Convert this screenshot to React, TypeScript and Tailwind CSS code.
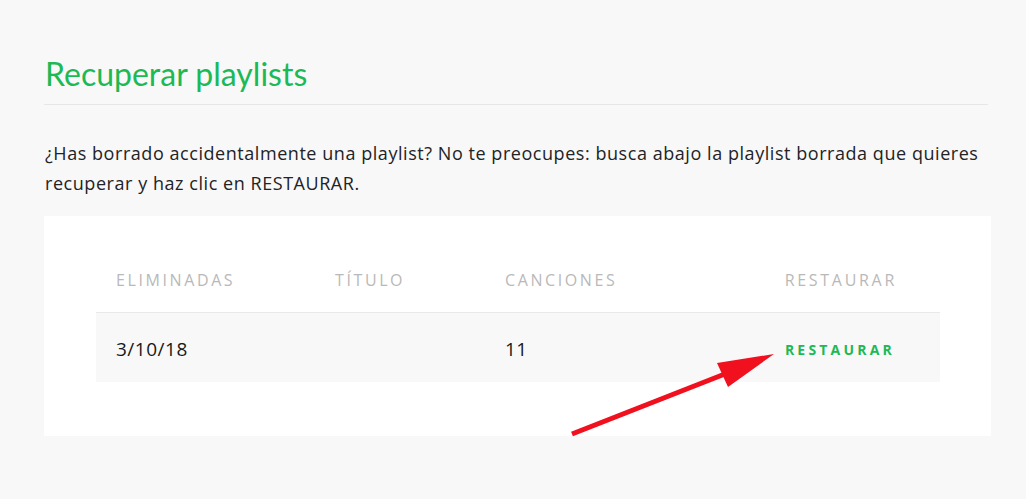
import React from "react";

export default function App() {
  return (
    <div className="min-h-[499px] w-full bg-[#f8f8f8] font-['Open_Sans','Liberation_Sans',sans-serif] text-[#222326]">
      <div className="relative ml-[44px] mr-[35px] pt-[52px]">
        <h1 className="pl-[1px] font-['Lato','Liberation_Sans',sans-serif] text-[32px] leading-[44px] text-[#1db954]">Recuperar playlists</h1>
        <div className="mt-[8px] mr-[3px] h-px bg-[#e6e6e6]" />
        <p className="mt-[33px] pl-[1px] pr-[6px] text-[18px] leading-[30px] tracking-[0.55px]">
          ¿Has borrado accidentalmente una playlist? No te preocupes: busca abajo la playlist borrada que quieres recuperar y haz clic en RESTAURAR.
        </p>
        <div className="mt-[18px] bg-white pl-[52px] pr-[51px] pt-[52px] pb-[54px]">
          <table className="w-full border-collapse">
            <thead>
              <tr className="border-b border-[#e9e9e9]">
                <th className="w-[219px] pl-[20px] pb-[20px] text-left text-[16px] font-normal tracking-[2.6px] text-[#b9b9b9]">ELIMINADAS</th>
                <th className="w-[170px] pl-[20px] pb-[20px] text-left text-[16px] font-normal tracking-[2.6px] text-[#b9b9b9]">TÍTULO</th>
                <th className="pl-[20px] pb-[20px] text-left text-[16px] font-normal tracking-[2.6px] text-[#b9b9b9]">CANCIONES</th>
                <th className="pr-[43px] pb-[20px] text-right text-[16px] font-normal tracking-[2.7px] text-[#b9b9b9]">RESTAURAR</th>
              </tr>
            </thead>
            <tbody>
              <tr className="h-[69px] bg-[#f8f8f8]">
                <td className="pl-[20px] pt-[3px] text-[19px] tracking-[0.5px] text-[#181818]">3/10/18</td>
                <td className="pl-[20px]"></td>
                <td className="pl-[20px] pt-[3px] text-[19px] tracking-[0.5px] text-[#181818]">11</td>
                <td className="pr-[45px] pt-[4px] text-right text-[14px] font-bold tracking-[3.2px] text-[#1db954]">RESTAURAR</td>
              </tr>
            </tbody>
          </table>
        </div>
      </div>
      <svg className="pointer-events-none absolute left-0 top-0" width="1026" height="499" viewBox="0 0 1026 499">
        <line x1="572" y1="434" x2="735" y2="370" stroke="#f0101e" strokeWidth="5" />
        <polygon points="774,354 717,363 728,387" fill="#f0101e" />
      </svg>
    </div>
  );
}
